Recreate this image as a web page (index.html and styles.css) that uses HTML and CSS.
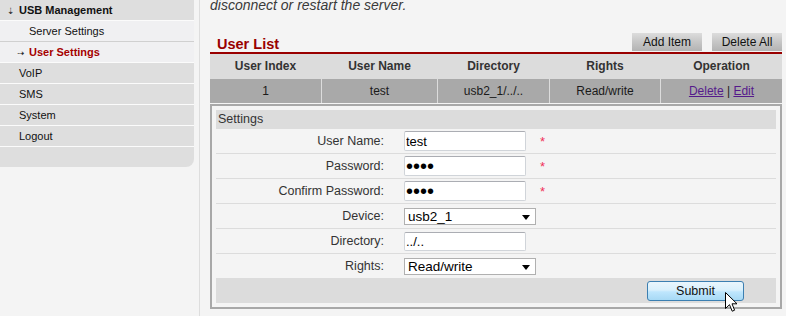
FILE: index.html
```html
<!DOCTYPE html>
<html>
<head>
<meta charset="utf-8">
<title>User Settings</title>
<link rel="stylesheet" href="styles.css">
</head>
<body>
<div class="page">
  <aside class="sidebar">
    <div class="nav-item open"><span class="ico">&#8675;</span>USB Management</div>
    <div class="nav-item sub first">Server Settings</div>
    <div class="nav-item sub active"><span class="ico">&#8674;</span>User Settings</div>
    <div class="nav-item">VoIP</div>
    <div class="nav-item">SMS</div>
    <div class="nav-item">System</div>
    <div class="nav-item">Logout</div>
    <div class="nav-foot"></div>
  </aside>
  <main class="content">
    <p class="intro">disconnect or restart the server.</p>
    <div class="list-head">
      <h2 class="list-title">User List</h2>
      <div class="actions">
        <button class="btn" type="button">Add Item</button>
        <button class="btn" type="button">Delete All</button>
      </div>
    </div>
    <div class="table">
      <div class="th">User Index</div>
      <div class="th">User Name</div>
      <div class="th">Directory</div>
      <div class="th">Rights</div>
      <div class="th">Operation</div>
      <div class="td">1</div>
      <div class="td">test</div>
      <div class="td">usb2_1/../..</div>
      <div class="td">Read/write</div>
      <div class="td"><a href="#" class="link">Delete</a> | <a href="#" class="link">Edit</a></div>
    </div>
    <form class="settings">
      <div class="settings-title">Settings</div>
      <div class="row">
        <label class="lbl">User Name:</label>
        <input class="field" type="text" value="test">
        <span class="req">*</span>
      </div>
      <div class="row">
        <label class="lbl">Password:</label>
        <input class="field pw" type="password" value="abcd">
        <span class="req">*</span>
      </div>
      <div class="row">
        <label class="lbl">Confirm Password:</label>
        <input class="field pw" type="password" value="abcd">
        <span class="req">*</span>
      </div>
      <div class="row">
        <label class="lbl">Device:</label>
        <div class="select"><span>usb2_1</span><svg class="caret" width="8" height="5" viewBox="0 0 8 5"><path d="M0 0H8L4 5Z" fill="#000"/></svg></div>
      </div>
      <div class="row">
        <label class="lbl">Directory:</label>
        <input class="field dir" type="text" value="../..">
      </div>
      <div class="row last">
        <label class="lbl">Rights:</label>
        <div class="select"><span>Read/write</span><svg class="caret" width="8" height="5" viewBox="0 0 8 5"><path d="M0 0H8L4 5Z" fill="#000"/></svg></div>
      </div>
      <div class="submit-row">
        <button class="submit" type="button">Submit</button>
      </div>
    </form>
  </main>
</div>
<svg class="cursor" width="13" height="21" viewBox="0 0 13 21"><path d="M0.5 0.5V16.5L4.5 12.7L7.2 19.2L9.6 18.2L7 11.8H12Z" fill="#fff" stroke="#000" stroke-width="1" stroke-linejoin="round"/></svg>
</body>
</html>
```

FILE: styles.css
```css
html, body {
  margin: 0;
  padding: 0;
}
body {
  background: #f4f4f4;
  font-family: "Liberation Sans", Arial, sans-serif;
  color: #222;
  overflow: hidden;
}
.page {
  display: flex;
  height: 316px;
}

/* sidebar */
.sidebar {
  width: 194px;
  flex: none;
  align-self: flex-start;
}
.nav-item {
  height: 20px;
  line-height: 20px;
  font-size: 11px;
  color: #111;
  background: #dedede;
  border-bottom: 1px solid #fbfbfb;
  padding-left: 19px;
  white-space: nowrap;
}
.nav-item.open {
  font-weight: bold;
  padding-left: 7px;
}
.ico {
  display: inline-block;
  width: 12px;
  font-family: "DejaVu Sans", sans-serif;
  font-size: 9px;
  font-weight: normal;
  color: #222;
}
.nav-item.sub {
  background: #f0f0f2;
  padding-left: 29px;
}
.nav-item.sub.first {
  border-bottom-color: #d0d0d0;
}
.nav-item.active {
  color: #a50000;
  font-weight: bold;
  padding-left: 17px;
}
.nav-foot {
  height: 20px;
  background: #dedede;
  border-bottom-right-radius: 8px;
}

/* content */
.content {
  flex: 1;
  min-width: 0;
  margin-left: 5px;
  border-left: 1px solid #dddddd;
  padding: 0 4px 0 10px;
}
.intro {
  margin: -3px 0 0;
  font-size: 14px;
  line-height: 16px;
  font-style: italic;
  color: #3a3a3a;
  white-space: nowrap;
}
.list-head {
  margin-top: 20px;
  height: 19px;
  display: flex;
  justify-content: space-between;
  align-items: flex-end;
  border-bottom: 2px solid #990000;
}
.list-title {
  margin: 0 0 0 7px;
  font-size: 14.5px;
  line-height: 16px;
  font-weight: bold;
  color: #990000;
}
.actions {
  display: flex;
  gap: 10px;
  margin-bottom: 1px;
}
.btn {
  width: 70px;
  height: 18px;
  padding: 0;
  border: 0;
  font-family: "Liberation Sans", Arial, sans-serif;
  font-size: 12px;
  color: #111;
  background: linear-gradient(to bottom, #dcdcdc 0%, #c6c6c6 50%, #b3b3b3 100%);
}

/* table */
.table {
  display: grid;
  grid-template-columns: 111px 115px 111px 110px 121px;
  grid-auto-rows: 24px;
  gap: 1px;
  background: #dcdcdc;
}
.th, .td {
  line-height: 24px;
  font-size: 12px;
  text-align: center;
  white-space: nowrap;
}
.th {
  background: #dcdcdc;
  font-weight: bold;
  color: #333;
}
.td {
  background: #a9a9a9;
  color: #1a1a1a;
}
.link {
  color: #551a8b;
  text-decoration: underline;
}

/* settings */
.settings {
  margin: 1px 0 0;
  border: 2px solid #a8a8a8;
  padding: 4px;
}
.settings-title {
  height: 19px;
  line-height: 19px;
  background: #dcdcdc;
  padding-left: 2px;
  font-size: 12.5px;
  color: #333;
}
.row {
  height: 24px;
  display: flex;
  align-items: center;
  border-bottom: 1px solid #dcdcdc;
}
.row.last {
  border-bottom: 0;
}
.lbl {
  width: 168px;
  margin-right: 20px;
  text-align: right;
  font-size: 12.5px;
  color: #333;
  white-space: nowrap;
}
.field {
  box-sizing: border-box;
  width: 122px;
  height: 20px;
  margin: 0;
  padding: 0 1px;
  border: 1px solid #d0d4d9;
  border-top-color: #abadb3;
  border-radius: 2px;
  background: #fff;
  font-family: "Liberation Sans", Arial, sans-serif;
  font-size: 13px;
  color: #000;
  outline: none;
}
.field.pw {
  font-size: 20px;
  letter-spacing: 0;
}
.field.dir {
  height: 19px;
}
.req {
  margin-left: 14px;
  font-size: 13px;
  color: #f0305a;
}
.select {
  box-sizing: border-box;
  width: 132px;
  height: 17px;
  border: 1px solid #b0b0b0;
  background: #fff;
  display: flex;
  align-items: center;
  justify-content: space-between;
  padding: 0 5px 0 3px;
  font-size: 13.5px;
  color: #000;
}
.caret {
  display: block;
  margin-top: 2px;
}
.submit-row {
  height: 25px;
  background: #dcdcdc;
  display: flex;
  justify-content: flex-end;
  align-items: flex-start;
  padding-right: 32px;
}
.submit {
  margin-top: 3px;
  width: 97px;
  height: 20px;
  padding: 0;
  border: 1px solid #3c7fb1;
  border-radius: 3px;
  background: linear-gradient(to bottom, #eaf6fd 0%, #d9f0fc 45%, #bee6fd 55%, #a7d9f5 100%);
  font-family: "Liberation Sans", Arial, sans-serif;
  font-size: 12.5px;
  color: #111;
}

.cursor {
  position: fixed;
  left: 725px;
  top: 292px;
}
```
